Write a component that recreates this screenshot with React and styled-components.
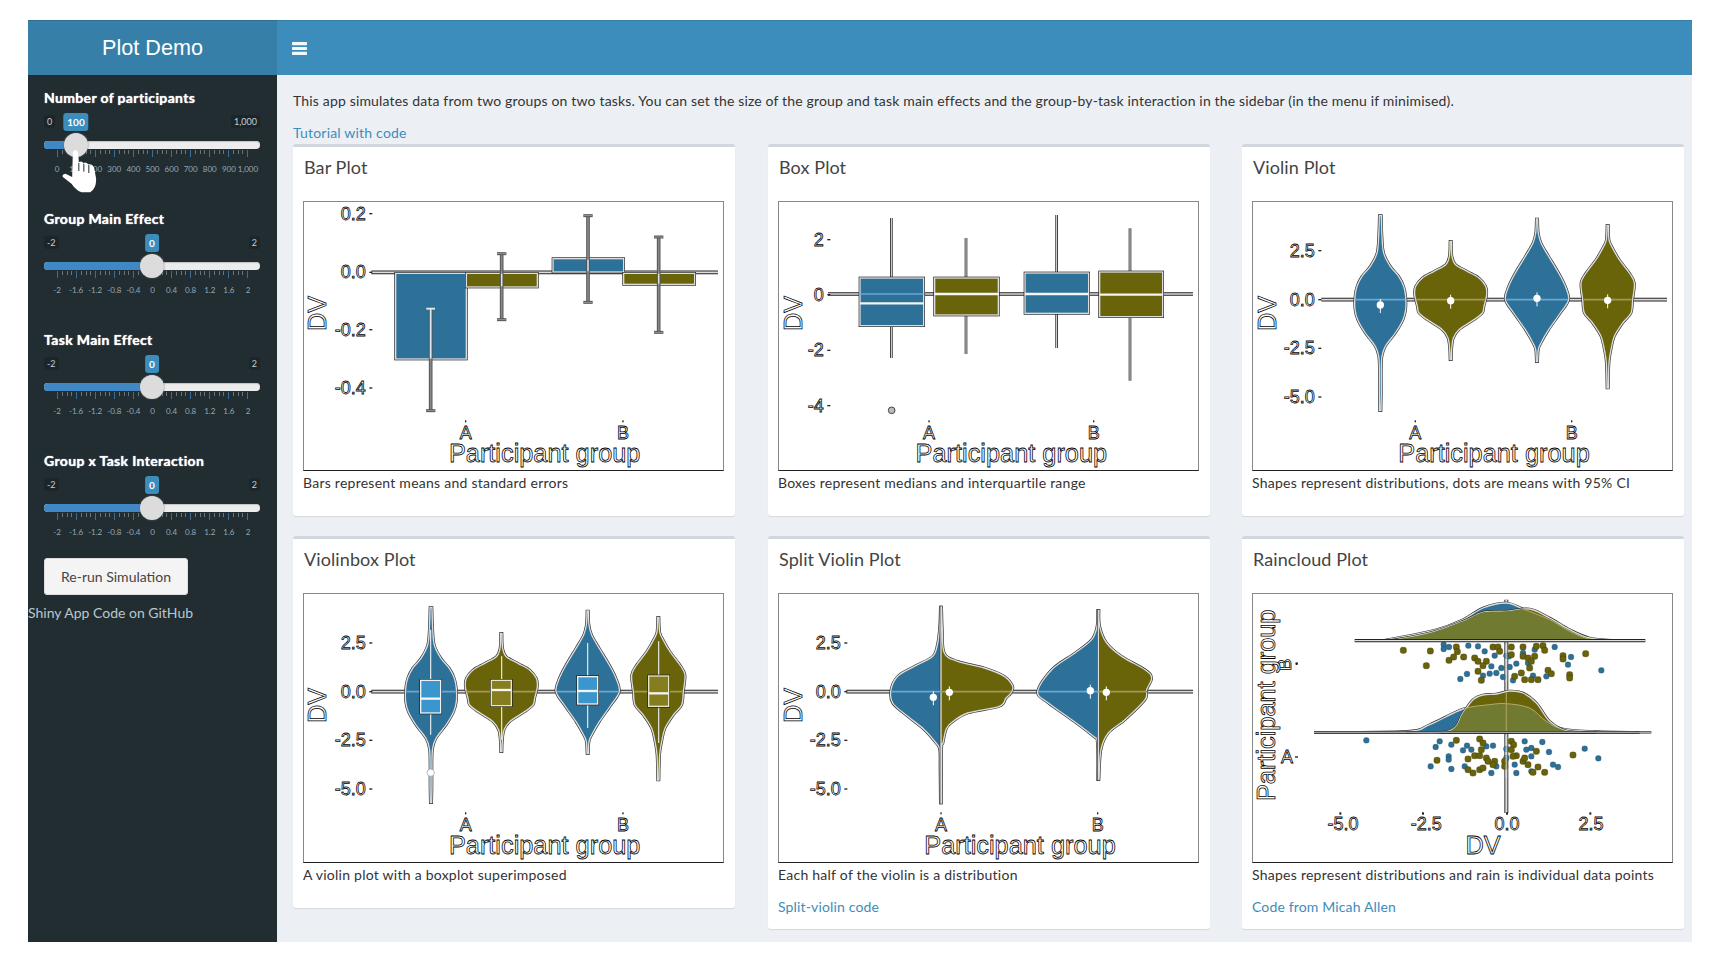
import React from 'react';
import styled, { createGlobalStyle } from 'styled-components';

const BLUE = '#2d7199';
const OLIVE = '#69630a';
const BODY_FONT = 'Lato, "Open Sans", sans-serif';

const GlobalStyle = createGlobalStyle`
  html, body { margin: 0; background: #fff; }
  * { box-sizing: border-box; }
  body { font-family: ${BODY_FONT}; font-size: 14px; }
`;

const Page = styled.div`
  padding: 20px 28px;
  width: 1720px;
  height: 962px;
`;

const Shell = styled.div`
  display: grid;
  grid-template-columns: 249px 1fr;
  grid-template-rows: 55px 1fr;
  height: 922px;
  overflow: hidden;
  background: #ecf0f5;
`;

const Logo = styled.div`
  display: flex;
  align-items: center;
  justify-content: center;
  background: #367fa9;
  border-top: 1px solid #2f6f94;
  color: #fff;
  font: 300 21.6px/1 "Liberation Sans", Arial, sans-serif;
`;

const Navbar = styled.div`
  display: flex;
  align-items: center;
  padding: 0 15px;
  background: #3c8dbc;
  border-top: 1px solid #357ea8;
`;

const BarsIcon = styled.svg`
  width: 15px;
  height: 13px;
  fill: #f2f7fa;
`;

const Sidebar = styled.aside`
  background: #222d32;
  padding-top: 13px;
`;

const SliderStack = styled.div`
  display: flex;
  flex-direction: column;
  gap: 36px;
  padding-left: 16px;
  width: 232px;
`;

const SliderBlock = styled.div`
  position: relative;
  display: flex;
  flex-direction: column;
`;

const SliderLabel = styled.label`
  height: 20px;
  font-size: 14px;
  line-height: 20px;
  font-weight: 700;
  letter-spacing: .35px;
  color: #fff;
  text-shadow: 0 0 1px #fff;
  white-space: nowrap;
`;

const LimitRow = styled.div`
  position: relative;
  display: flex;
  justify-content: space-between;
  align-items: center;
  margin-top: 4px;
  height: 18px;
`;

const Limit = styled.span`
  padding: 1px 3px;
  border-radius: 3px;
  background: #1c2529;
  color: #c6ced3;
  font-size: 9px;
  line-height: 11px;
`;

const ValueChip = styled.span`
  position: absolute;
  top: 1px;
  left: ${p => p.$pos}px;
  transform: translateX(-50%);
  padding: 0 4px;
  height: 18px;
  border-radius: 3px;
  background: #3c8dbc;
  color: #fff;
  font-size: 10px;
  font-weight: 700;
  line-height: 18px;
`;

const Track = styled.div`
  position: relative;
  margin-top: 11px;
  height: 8px;
  border-radius: 4px;
  background: #ececec;
  box-shadow: inset 0 1px 1px #c4c4c4;
`;

const TrackFill = styled.div`
  width: ${p => p.$pos}px;
  height: 100%;
  border-radius: 4px 0 0 4px;
  background: #3f87c5;
`;

const Handle = styled.div`
  position: absolute;
  top: -8px;
  left: ${p => p.$pos - 12}px;
  width: 24px;
  height: 24px;
  border-radius: 50%;
  background: #dcdcdc;
  box-shadow: 0 0 2px #6d6d6d;
`;

const TickRow = styled.div`
  display: flex;
  justify-content: space-between;
  margin: 1px 12px 0 13px;
  height: 7px;
`;

const Tick = styled.i`
  display: block;
  width: 1px;
  height: ${p => p.$major ? 7 : 4}px;
  background: ${p => p.$major ? '#3c6e9c' : '#68747a'};
`;

const TickLabels = styled.div`
  display: flex;
  justify-content: space-between;
  margin: 8px 12px 0 13px;
  height: 8px;
`;

const TickLabel = styled.span`
  display: flex;
  justify-content: center;
  width: 0;
  color: #97a6b4;
  font-size: 8px;
  line-height: 8px;
  white-space: nowrap;
`;

const HandCursor = styled.svg`
  position: absolute;
  top: 61px;
  left: 18px;
  width: 35px;
  height: 44px;
`;

const RerunButton = styled.button`
  display: block;
  margin: 22px 0 0 16px;
  width: 144px;
  height: 37px;
  border: 1px solid #ddd;
  border-radius: 3px;
  background: #f4f4f4;
  color: #444;
  font-family: inherit;
  font-size: 14px;
`;

const SideLink = styled.a`
  display: block;
  margin-top: 8px;
  color: #b8c7ce;
  font-size: 14px;
  line-height: 20px;
`;

const Content = styled.main`
  padding: 16px 0 0 16px;
  color: #333;
`;

const Intro = styled.p`
  margin: 0;
  line-height: 20px;
  letter-spacing: .165px;
  white-space: nowrap;
`;

const TutorialLink = styled.a`
  display: block;
  margin-top: 12px;
  height: 21px;
  color: #3c8dbc;
  line-height: 20px;
  letter-spacing: .2px;
`;

const Cards = styled.div`
  display: grid;
  grid-template-columns: 475px 474px 442px;
  row-gap: 20px;
  align-items: start;
`;

const Card = styled.section`
  width: 442px;
  padding: 10px 10px ${p => p.$link ? 12 : 23}px;
  border-top: 3px solid #d2d6de;
  border-radius: 3px;
  background: #fff;
  box-shadow: 0 1px 1px rgba(0, 0, 0, .1);
`;

const CardTitle = styled.h3`
  margin: 0 0 24px;
  padding-left: 1px;
  color: #444;
  font-size: 18px;
  font-weight: 400;
  line-height: 20px;
  letter-spacing: .1px;
`;

const PlotFrame = styled.div`
  width: 421px;
  height: 270px;
  border: 1px solid;
  border-color: #888 #888 #222;
  background: #fff;

  svg { display: block; width: 419px; height: 268px; }
`;

const Caption = styled.p`
  margin: 2px 0 0;
  line-height: 20px;
  letter-spacing: .25px;
  white-space: nowrap;
`;

const CardLink = styled.a`
  display: block;
  margin-top: 12px;
  color: #3c8dbc;
  line-height: 20px;
  letter-spacing: .15px;
`;

const AxisText = styled.text`
  font-family: "Liberation Sans", Arial, sans-serif;
  font-size: ${p => p.$size || 54}px;
  fill: #fff;
  stroke: #000;
  stroke-width: 2.3;
`;

// catmull-rom through the points, all plot shapes go through this
const smooth = pts => {
  let d = `M${pts[0][0]} ${pts[0][1]}`;
  for (let i = 0; i < pts.length - 1; i++) {
    const p0 = pts[i - 1] || pts[i];
    const p1 = pts[i];
    const p2 = pts[i + 1];
    const p3 = pts[i + 2] || p2;
    d += `C${p1[0] + (p2[0] - p0[0]) / 6} ${p1[1] + (p2[1] - p0[1]) / 6} ${p2[0] - (p3[0] - p1[0]) / 6} ${p2[1] - (p3[1] - p1[1]) / 6} ${p2[0]} ${p2[1]}`;
  }
  return d;
};

const violinPath = (cx, right, left = right) => {
  const r = right.map(([y, w]) => [cx + w, y]);
  const l = left.map(([y, w]) => [cx - w, y]).reverse();
  return `${smooth(r)}L${l[0][0]} ${l[0][1]}${smooth(l).replace(/^M[^C]*/, '')}Z`;
};

const Rule = ({ x1, y1, x2, y2, edge = '#222', core = '#ddd', w = 11, c = 5 }) => (
  <>
    <line x1={x1} y1={y1} x2={x2} y2={y2} stroke={edge} strokeWidth={w} />
    <line x1={x1} y1={y1} x2={x2} y2={y2} stroke={core} strokeWidth={c} />
  </>
);

const Blob = ({ d, fill }) => (
  <>
    <path d={d} fill="none" stroke="#333" strokeWidth="8" />
    <path d={d} fill={fill} stroke="#ddd" strokeWidth="4" />
  </>
);

const ErrorBar = ({ x, y1, y2 }) => (
  <>
    <Rule x1={x} y1={y1} x2={x} y2={y2} edge="#555" core="#888" w={11} c={5} />
    <Rule x1={x - 14} y1={y1} x2={x + 14} y2={y1} edge="#555" core="#999" w={9} c={3} />
    <Rule x1={x - 14} y1={y2} x2={x + 14} y2={y2} edge="#555" core="#999" w={9} c={3} />
  </>
);

const Box = ({ x1, x2, y1, y2, med, fill, stroke = '#ddd' }) => (
  <>
    <rect x={x1} y={y1} width={x2 - x1} height={y2 - y1} fill="none" stroke="#222" strokeWidth="8" />
    <rect x={x1} y={y1} width={x2 - x1} height={y2 - y1} fill={fill} stroke={stroke} strokeWidth="4" />
    {med && <line x1={x1} y1={med} x2={x2} y2={med} stroke="#f4f4f4" strokeWidth="7" />}
  </>
);

const MeanDot = ({ x, y }) => (
  <>
    <line x1={x} y1={y - 18} x2={x} y2={y + 24} stroke="#fff" strokeWidth="3" />
    <circle cx={x} cy={y} r="11" fill="#fff" />
  </>
);

const Axes = ({ ticks, right, a, b, title, dv, dy = 0 }) => (
  <>
    {ticks.map(([label, y]) => (
      <g key={label}>
        <AxisText x={right} y={y + 18} textAnchor="end">{label}</AxisText>
        <rect x={right + 11} y={y - 2} width={9} height={4} fill="#222" />
      </g>
    ))}
    <rect x={a - 2} y={872 + dy} width={4} height={6} fill="#222" />
    <rect x={b - 2} y={872 + dy} width={4} height={6} fill="#222" />
    <AxisText x={a} y={928 + dy} textAnchor="middle">A</AxisText>
    <AxisText x={b} y={928 + dy} textAnchor="middle">B</AxisText>
    <AxisText x={title} y={998 + dy} textAnchor="middle" $size={76}>Participant group</AxisText>
    <AxisText x={dv} y={551 + dy} textAnchor="middle" $size={76} transform={`rotate(-90 ${dv} ${551 + dy})`}>DV</AxisText>
  </>
);

const PlotSvg = ({ ox, oy, children }) => (
  <PlotFrame>
    <svg viewBox={`${ox + 3} ${oy + 3} 1257 804`}>{children}</svg>
  </PlotFrame>
);

const shift = (p, dy) => p.map(([y, w]) => [y + dy, w]);

// half-width profiles of the four violins, read off the violin plot
const V_A1 = [[258, 3], [320, 5], [370, 10], [410, 30], [440, 55], [470, 70], [500, 76], [540, 76], [570, 68], [610, 45], [650, 15], [680, 5], [720, 3], [790, 3], [843, 2]];
const V_A2 = [[335, 2], [380, 4], [405, 15], [425, 50], [445, 85], [470, 105], [495, 108], [530, 100], [550, 95], [570, 70], [600, 25], [625, 8], [660, 3], [690, 2]];
const V_B1 = [[268, 2], [310, 4], [340, 12], [380, 35], [430, 65], [470, 85], [510, 95], [550, 70], [600, 35], [640, 12], [660, 4], [696, 2]];
const V_B2 = [[287, 2], [330, 4], [350, 12], [390, 35], [430, 65], [460, 80], [510, 75], [550, 70], [580, 45], [620, 20], [660, 10], [700, 4], [775, 2]];

const BarPlot = () => (
  <PlotSvg ox={70} oy={214}>
    <Rule x1={275} y1={428} x2={1315} y2={428} />
    <Box x1={348} x2={560} y1={431} y2={688} fill={BLUE} />
    <Box x1={560} x2={773} y1={431} y2={472} fill={OLIVE} />
    <Box x1={820} x2={1032} y1={387} y2={427} fill={BLUE} />
    <Box x1={1032} x2={1245} y1={431} y2={464} fill={OLIVE} />
    <ErrorBar x={453} y1={537} y2={843} />
    <line x1={453} y1={537} x2={453} y2={687} stroke="#dfe6ea" strokeWidth="5" />
    <line x1={440} y1={537} x2={466} y2={537} stroke="#dfe6ea" strokeWidth="6" />
    <ErrorBar x={666} y1={372} y2={570} />
    <ErrorBar x={925} y1={258} y2={518} />
    <ErrorBar x={1137} y1={322} y2={608} />
    <line x1={925} y1={390} x2={925} y2={425} stroke="#dfe6ea" strokeWidth="4" />
    <line x1={666} y1={432} x2={666} y2={470} stroke="#dfe6ea" strokeWidth="4" />
    <line x1={1137} y1={432} x2={1137} y2={462} stroke="#dfe6ea" strokeWidth="4" />
    <Axes ticks={[['0.2', 252], ['0.0', 428], ['-0.2', 600], ['-0.4', 775]]} right={258} a={558} b={1030} title={795} dv={140} />
  </PlotSvg>
);

const BoxPlot = () => (
  <PlotSvg ox={55} oy={214}>
    <Rule x1={205} y1={493} x2={1300} y2={493} />
    {[[395, 265, 685], [619, 325, 673], [891, 256, 655], [1111, 296, 753]].map(([x, y1, y2]) => (
      <Rule key={x} x1={x} y1={y1} x2={x} y2={y2} edge="#222" core="#eee" w={8} c={3} />
    ))}
    <circle cx={396} cy={842} r="10" fill="#bbb" stroke="#444" strokeWidth="3" />
    <Box x1={301} x2={492} y1={445} y2={588} med={521} fill={BLUE} />
    <Box x1={525} x2={716} y1={445} y2={556} med={493} fill={OLIVE} />
    <Box x1={796} x2={987} y1={430} y2={551} med={493} fill={BLUE} />
    <Box x1={1020} x2={1209} y1={427} y2={561} med={495} fill={OLIVE} />
    <line x1={301} y1={493} x2={492} y2={493} stroke="#6aa6d6" strokeWidth="4" />
    <Axes ticks={[['2', 330], ['0', 495], ['-2', 662], ['-4', 828]]} right={192} a={508} b={1002} title={755} dv={127} />
  </PlotSvg>
);

const ViolinPlot = () => (
  <PlotSvg ox={67} oy={214}>
    <Rule x1={275} y1={510} x2={1312} y2={510} />
    <Blob d={violinPath(452, V_A1)} fill={BLUE} />
    <Blob d={violinPath(663, V_A2)} fill={OLIVE} />
    <Blob d={violinPath(922, V_B1)} fill={BLUE} />
    <Blob d={violinPath(1134, V_B2)} fill={OLIVE} />
    <line x1={378} y1={510} x2={526} y2={510} stroke="#6aa6d6" strokeWidth="5" />
    <line x1={830} y1={510} x2={1015} y2={510} stroke="#6aa6d6" strokeWidth="5" />
    <line x1={558} y1={510} x2={768} y2={510} stroke="#a3985a" strokeWidth="5" />
    <line x1={1062} y1={510} x2={1206} y2={510} stroke="#a3985a" strokeWidth="5" />
    <MeanDot x={452} y={526} />
    <MeanDot x={663} y={513} />
    <MeanDot x={922} y={506} />
    <MeanDot x={1134} y={512} />
    <Axes ticks={[['2.5', 363], ['0.0', 510], ['-2.5', 656], ['-5.0', 802]]} right={255} a={557} b={1026} title={793} dv={138} />
  </PlotSvg>
);

const ViolinBoxPlot = () => (
  <PlotSvg ox={70} oy={190}>
    <Rule x1={275} y1={486} x2={1315} y2={486} />
    <Blob d={violinPath(454, shift(V_A1, -24))} fill={BLUE} />
    <Blob d={violinPath(665, shift(V_A2, -24))} fill={OLIVE} />
    <Blob d={violinPath(924, shift(V_B1, -24))} fill={BLUE} />
    <Blob d={violinPath(1136, shift(V_B2, -24))} fill={OLIVE} />
    <line x1={380} y1={486} x2={528} y2={486} stroke="#6aa6d6" strokeWidth="5" />
    <line x1={832} y1={486} x2={1017} y2={486} stroke="#6aa6d6" strokeWidth="5" />
    <line x1={560} y1={486} x2={770} y2={486} stroke="#a3985a" strokeWidth="5" />
    <line x1={1064} y1={486} x2={1208} y2={486} stroke="#a3985a" strokeWidth="5" />
    {[[453, 300, 615], [666, 380, 630], [924, 340, 595], [1137, 335, 640]].map(([x, y1, y2]) => (
      <line key={x} x1={x} y1={y1} x2={x} y2={y2} stroke="#e8edf0" strokeWidth="3.5" />
    ))}
    <Box x1={423} x2={483} y1={452} y2={550} med={507} fill="#3a96cc" stroke="#eef2f4" />
    <Box x1={635} x2={695} y1={452} y2={528} med={481} fill="#857d1e" stroke="#e8e6c8" />
    <Box x1={894} x2={954} y1={441} y2={523} med={484} fill="#3a96cc" stroke="#eef2f4" />
    <Box x1={1107} x2={1167} y1={439} y2={530} med={491} fill="#857d1e" stroke="#e8e6c8" />
    <circle cx={453} cy={729} r="11" fill="#fff" stroke="#999" strokeWidth="2" />
    <Axes ticks={[['2.5', 340], ['0.0', 486], ['-2.5', 632], ['-5.0', 778]]} right={258} a={558} b={1030} title={795} dv={140} dy={-24} />
  </PlotSvg>
);

const SPLIT_AL = [[232, 2], [290, 4], [340, 10], [380, 25], [410, 80], [440, 130], [480, 150], [520, 145], [560, 100], [600, 50], [640, 15], [660, 4], [720, 3], [820, 2]];
const SPLIT_AR = [[232, 2], [300, 4], [370, 10], [395, 50], [415, 130], [440, 190], [470, 215], [490, 210], [505, 195], [530, 175], [550, 80], [580, 30], [600, 15], [640, 6], [660, 2], [820, 2]];
const SPLIT_BL = [[242, 2], [290, 4], [330, 20], [370, 70], [420, 140], [486, 182], [520, 150], [570, 80], [620, 15], [640, 3], [750, 2]];
const SPLIT_BR = [[242, 2], [290, 4], [340, 25], [380, 70], [420, 140], [445, 160], [480, 145], [510, 140], [570, 80], [610, 30], [660, 8], [750, 2]];
const NONE_L = y => [[y[0], 0], [y[1], 0]];

const SplitViolinPlot = () => (
  <PlotSvg ox={55} oy={190}>
    <Rule x1={260} y1={486} x2={1300} y2={486} />
    <Blob d={violinPath(544, NONE_L([232, 820]), SPLIT_AL)} fill={BLUE} />
    <Blob d={violinPath(544, SPLIT_AR, NONE_L([232, 820]))} fill={OLIVE} />
    <Blob d={violinPath(1016, NONE_L([242, 750]), SPLIT_BL)} fill={BLUE} />
    <Blob d={violinPath(1016, SPLIT_BR, NONE_L([242, 750]))} fill={OLIVE} />
    <line x1={395} y1={486} x2={544} y2={486} stroke="#6aa6d6" strokeWidth="5" />
    <line x1={836} y1={486} x2={1016} y2={486} stroke="#6aa6d6" strokeWidth="5" />
    <line x1={544} y1={486} x2={755} y2={486} stroke="#a3985a" strokeWidth="5" />
    <line x1={1016} y1={486} x2={1162} y2={486} stroke="#a3985a" strokeWidth="5" />
    <MeanDot x={521} y={503} />
    <MeanDot x={569} y={488} />
    <MeanDot x={992} y={483} />
    <MeanDot x={1040} y={488} />
    <Axes ticks={[['2.5', 340], ['0.0', 486], ['-2.5', 632], ['-5.0', 778]]} right={243} a={544} b={1014} title={781} dv={127} dy={-24} />
  </PlotSvg>
);

const CLOUD_B_BLUE = [[460, 333], [620, 300], [700, 270], [760, 235], [830, 220], [880, 238], [960, 270], [1020, 305], [1080, 328], [1160, 333]];
const CLOUD_B_OLIVE = [[480, 333], [600, 310], [700, 275], [760, 248], [830, 245], [900, 238], [960, 265], [1020, 300], [1080, 325], [1160, 333]];
const CLOUD_A_BLUE = [[253, 608], [530, 605], [600, 585], [700, 538], [780, 525], [830, 522], [900, 535], [950, 575], [1000, 598], [1100, 606], [1230, 608]];
const CLOUD_A_OLIVE = [[530, 608], [660, 604], [700, 550], [730, 510], [760, 496], [800, 493], [840, 484], [880, 490], [920, 520], [960, 575], [1010, 604], [1100, 608]];

const RAIN_BLUE = [[642, 345], [642, 358], [658, 352], [716, 348], [745, 350], [765, 365], [795, 378], [830, 378], [838, 380], [880, 370], [915, 360], [975, 352], [1024, 382], [1015, 405], [1115, 422], [950, 440], [910, 438], [860, 402], [840, 412], [815, 415], [785, 410], [712, 433], [692, 448], [760, 438], [780, 432], [800, 430], [820, 442], [850, 452], [895, 400], [410, 632], [630, 635], [618, 652], [665, 645], [657, 680], [657, 690], [603, 710], [665, 718], [712, 648], [700, 662], [725, 660], [790, 648], [770, 650], [830, 658], [885, 635], [938, 637], [958, 667], [905, 655], [890, 660], [1065, 657], [1106, 686], [970, 705], [985, 712], [860, 730], [855, 705], [785, 730], [905, 725], [905, 680], [830, 685], [800, 710], [705, 710]];
const RAIN_OLIVE = [[521, 362], [602, 364], [590, 408], [680, 352], [683, 366], [702, 382], [658, 392], [672, 382], [735, 385], [745, 395], [770, 395], [760, 408], [790, 352], [805, 352], [845, 352], [880, 352], [880, 380], [895, 385], [915, 380], [905, 395], [900, 415], [920, 350], [940, 348], [945, 362], [1000, 378], [1000, 388], [1068, 372], [1020, 435], [1020, 445], [955, 422], [965, 432], [885, 450], [905, 450], [925, 450], [875, 430], [855, 440], [755, 452], [745, 425], [810, 365], [845, 375], [622, 692], [680, 632], [715, 688], [750, 628], [760, 640], [755, 660], [735, 678], [750, 678], [770, 685], [775, 695], [795, 695], [790, 705], [750, 720], [730, 730], [715, 720], [760, 715], [825, 695], [825, 710], [845, 635], [852, 645], [845, 660], [860, 678], [880, 695], [895, 705], [925, 712], [945, 728], [910, 728], [920, 665], [885, 685], [1030, 676], [850, 680]];

const Cloud = ({ id, blue, olive }) => (
  <>
    <clipPath id={id}><path d={`${smooth(olive)}Z`} /></clipPath>
    <Blob d={`${smooth(blue)}Z`} fill={BLUE} />
    <Blob d={`${smooth(olive)}Z`} fill={OLIVE} />
    <path d={`${smooth(blue)}Z`} fill="#707b31" stroke="#b5ab6a" strokeWidth="3" clipPath={`url(#${id})`} />
  </>
);

const RaincloudPlot = () => (
  <PlotSvg ox={67} oy={190}>
    <Rule x1={830} y1={210} x2={830} y2={850} w={12} c={6} edge="#333" />
    {RAIN_BLUE.map(([x, y], i) => <rect key={i} x={x - 8} y={y - 8} width="16" height="16" rx="6" fill={BLUE} stroke="#1d4a66" strokeWidth="1.5" />)}
    {RAIN_OLIVE.map(([x, y], i) => <rect key={i} x={x - 9} y={y - 9} width="18" height="18" rx="6" fill={OLIVE} stroke="#453f05" strokeWidth="1.5" />)}
    <line x1={830} y1={345} x2={830} y2={458} stroke="#ddd" strokeWidth="5" opacity=".7" />
    <line x1={830} y1={620} x2={830} y2={745} stroke="#ddd" strokeWidth="5" opacity=".7" />
    <Cloud id="cloud-b" blue={CLOUD_B_BLUE} olive={CLOUD_B_OLIVE} />
    <Cloud id="cloud-a" blue={CLOUD_A_BLUE} olive={CLOUD_A_OLIVE} />
    <Rule x1={375} y1={333} x2={1247} y2={333} edge="#222" core="#ddd" w={10} c={4} />
    <Rule x1={253} y1={608} x2={1265} y2={608} edge="#222" core="#ddd" w={7} c={2.5} />
    <line x1={830} y1={490} x2={830} y2={604} stroke="#a39a5c" strokeWidth="4" />
    {[['-5.0', 340, 332], ['-2.5', 590, 580], ['0.0', 832, 832], ['2.5', 1084, 1082]].map(([label, x, dot]) => (
      <g key={label}>
        <rect x={dot - 3} y={848} width={6} height={7} fill="#222" />
        <AxisText x={x} y={902} textAnchor="middle">{label}</AxisText>
      </g>
    ))}
    <AxisText x={172} y={701} textAnchor="middle">A</AxisText>
    <rect x={196} y={680} width={9} height={4} fill="#222" />
    <AxisText x={185} y={405} textAnchor="middle" transform="rotate(-90 185 405)">B</AxisText>
    <circle cx={201} cy={402} r="4" fill="#222" />
    <AxisText x={760} y={972} textAnchor="middle" $size={76}>DV</AxisText>
    <AxisText x={137} y={527} textAnchor="middle" $size={76} transform="rotate(-90 137 527)">Participant group</AxisText>
  </PlotSvg>
);

const EFFECT_TICKS = ['-2', '-1.6', '-1.2', '-0.8', '-0.4', '0', '0.4', '0.8', '1.2', '1.6', '2'];
const COUNT_TICKS = ['0', '100', '200', '300', '400', '500', '600', '700', '800', '900', '1,000'];

const Slider = ({ label, min, max, value, pos, ticks, children }) => (
  <SliderBlock>
    <SliderLabel>{label}</SliderLabel>
    <LimitRow>
      <Limit>{min}</Limit>
      <ValueChip $pos={pos}>{value}</ValueChip>
      <Limit>{max}</Limit>
    </LimitRow>
    <Track>
      <TrackFill $pos={pos} />
      <Handle $pos={pos} />
    </Track>
    <TickRow>
      {Array.from({ length: 41 }, (_, i) => <Tick key={i} $major={i % 4 === 0} />)}
    </TickRow>
    <TickLabels>
      {ticks.map(t => <TickLabel key={t}>{t}</TickLabel>)}
    </TickLabels>
    {children}
  </SliderBlock>
);

const Hand = () => (
  <HandCursor viewBox="0 0 104 132">
    <path d="M32 10Q40 -4 48 10L50 40Q58 34 64 42Q72 38 78 46Q90 44 96 56L102 90Q102 120 84 130L58 130Q40 122 28 104L2 84Q-2 76 10 74L30 84Z" fill="#fff" />
    <path d="M50 42V66M65 44V68M80 48V72" stroke="#222d32" strokeWidth="3" fill="none" />
  </HandCursor>
);

const PlotCard = ({ title, caption, link, children }) => (
  <Card $link={!!link}>
    <CardTitle>{title}</CardTitle>
    {children}
    <Caption>{caption}</Caption>
    {link && <CardLink>{link}</CardLink>}
  </Card>
);

export default function App() {
  return (
    <Page>
      <GlobalStyle />
      <Shell>
        <Logo>Plot Demo</Logo>
        <Navbar>
          <BarsIcon viewBox="0 0 15 13">
            <rect width="15" height="3.2" rx=".6" />
            <rect y="4.9" width="15" height="3.2" rx=".6" />
            <rect y="9.8" width="15" height="3.2" rx=".6" />
          </BarsIcon>
        </Navbar>
        <Sidebar>
          <SliderStack>
            <Slider label="Number of participants" min="0" max="1,000" value="100" pos={32} ticks={COUNT_TICKS}>
              <Hand />
            </Slider>
            <Slider label="Group Main Effect" min="-2" max="2" value="0" pos={108} ticks={EFFECT_TICKS} />
            <Slider label="Task Main Effect" min="-2" max="2" value="0" pos={108} ticks={EFFECT_TICKS} />
            <Slider label="Group x Task Interaction" min="-2" max="2" value="0" pos={108} ticks={EFFECT_TICKS} />
          </SliderStack>
          <RerunButton>Re-run Simulation</RerunButton>
          <SideLink>Shiny App Code on GitHub</SideLink>
        </Sidebar>
        <Content>
          <Intro>This app simulates data from two groups on two tasks. You can set the size of the group and task main effects and the group-by-task interaction in the sidebar (in the menu if minimised).</Intro>
          <TutorialLink>Tutorial with code</TutorialLink>
          <Cards>
            <PlotCard title="Bar Plot" caption="Bars represent means and standard errors"><BarPlot /></PlotCard>
            <PlotCard title="Box Plot" caption="Boxes represent medians and interquartile range"><BoxPlot /></PlotCard>
            <PlotCard title="Violin Plot" caption="Shapes represent distributions, dots are means with 95% CI"><ViolinPlot /></PlotCard>
            <PlotCard title="Violinbox Plot" caption="A violin plot with a boxplot superimposed"><ViolinBoxPlot /></PlotCard>
            <PlotCard title="Split Violin Plot" caption="Each half of the violin is a distribution" link="Split-violin code"><SplitViolinPlot /></PlotCard>
            <PlotCard title="Raincloud Plot" caption="Shapes represent distributions and rain is individual data points" link="Code from Micah Allen"><RaincloudPlot /></PlotCard>
          </Cards>
        </Content>
      </Shell>
    </Page>
  );
}
